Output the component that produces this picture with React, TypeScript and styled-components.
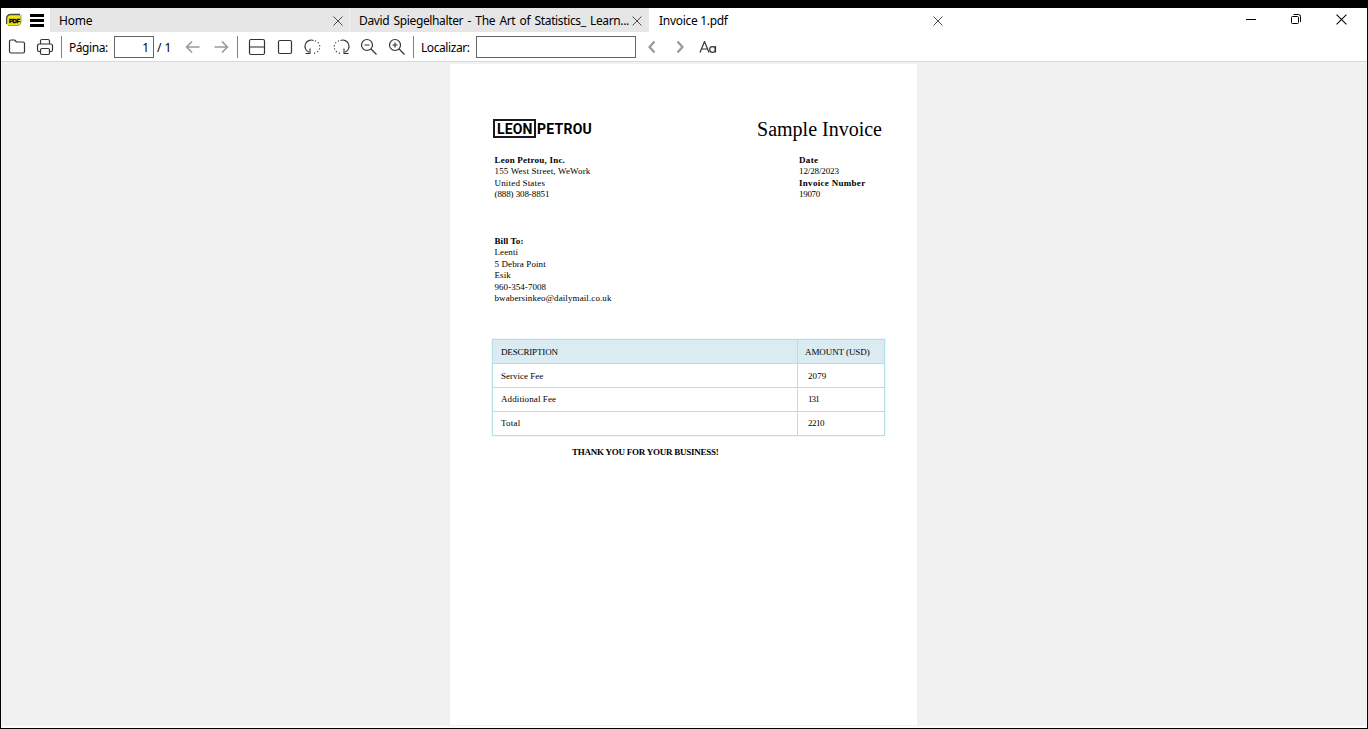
import React from "react";
import styled, { createGlobalStyle } from "styled-components";

const GlobalStyle = createGlobalStyle`
  *, *::before, *::after { box-sizing: border-box; }
  html, body, #root { margin: 0; height: 100%; }
  body { overflow: hidden; background: #000; }
`;

const Window = styled.div`
  height: 729px;
  width: 1368px;
  padding: 8px 1px 1px;
  background: #000;
  display: flex;
  flex-direction: column;
  font: 12px/16px "Noto Sans", "Open Sans", sans-serif;
  color: #000;
`;

const TitleBar = styled.header`
  height: 24px;
  flex: none;
  display: flex;
  background: #fff;
`;

const AppMenu = styled.div`
  width: 49px;
  flex: none;
  display: flex;
  align-items: center;
  padding-left: 5px;
  gap: 8px;
`;

const Tab = styled.div<{ $active?: boolean; $last?: boolean }>`
  width: ${(p) => (p.$last ? 299 : 300)}px;
  flex: none;
  display: flex;
  align-items: center;
  justify-content: space-between;
  padding: 1px ${(p) => (p.$last ? 7 : 6)}px 0 ${(p) => (p.$active ? 10 : 9)}px;
  background: ${(p) => (p.$active ? "#fff" : "#e6e6e6")};
  border-right: ${(p) => (p.$active || p.$last ? "none" : "1px solid #efefef")};
`;

const TabTitle = styled.span<{ $track?: number; $words?: number }>`
  white-space: nowrap;
  letter-spacing: ${(p) => p.$track ?? -0.3}px;
  word-spacing: ${(p) => p.$words ?? 0}px;
`;

const Icon = styled.svg`
  flex: none;
  display: block;
  fill: none;
`;

const Controls = styled.div`
  margin-left: auto;
  display: flex;
  align-items: flex-start;
  padding: 6px 20px 0 0;
  gap: 34px;
`;

const ToolBar = styled.div`
  height: 30px;
  flex: none;
  display: flex;
  align-items: center;
  background: #fff;
  border-bottom: 1px solid #d9d9d9;
  padding-left: 6px;
`;

const ToolButton = styled.div`
  width: 20px;
  height: 20px;
  margin-right: 8px;
  flex: none;
`;

const Divider = styled.i<{ $tight?: boolean }>`
  width: 1px;
  height: 22px;
  margin-left: ${(p) => (p.$tight ? -2 : 0)}px;
  background: #808080;
  flex: none;
`;

const Label = styled.span<{ $w: number; $track?: number }>`
  width: ${(p) => p.$w}px;
  flex: none;
  padding-top: 2px;
  white-space: nowrap;
  letter-spacing: ${(p) => p.$track ?? 0}px;
`;

const Field = styled.div<{ $w: number }>`
  width: ${(p) => p.$w}px;
  height: 22px;
  flex: none;
  border: 1px solid #646464;
  padding: 3px 4px 0;
  text-align: right;
`;

const Gap = styled.i<{ $w: number }>`
  width: ${(p) => p.$w}px;
  flex: none;
`;

const Canvas = styled.main`
  flex: 1;
  background: #f1f1f1;
  border-bottom: 2px solid #fff;
  padding: 2px 0 1px 449px;
  display: flex;
`;

const Page = styled.article`
  width: 467px;
  background: #fff;
  padding: 55px 32px 0 42px;
  font-family: "Liberation Serif", serif;
  font-size: 9px;
  line-height: 11.4px;
  color: #000;
`;

const PageHead = styled.div`
  display: flex;
  justify-content: space-between;
  height: 36px;
  padding: 0 3px 0 1px;
`;

const Logo = styled.div`
  display: flex;
  align-items: center;
  height: 19px;
  font: 700 14px/16px "Roboto", sans-serif;
`;

const LogoBox = styled.span`
  width: 43px;
  height: 19px;
  border: 2px solid #1a1a1a;
  padding: 0 0 0 2px;
  letter-spacing: 0.15px;
`;

const LogoRest = styled.span`
  padding: 1px 0 0 1px;
  letter-spacing: 0.25px;
`;

const Title = styled.h1`
  margin: 0;
  font-size: 20px;
  font-weight: 400;
  line-height: 21px;
  white-space: nowrap;
`;

const Parties = styled.div`
  display: flex;
  height: 81px;
  padding-left: 2.5px;
`;

const Block = styled.div<{ $w?: number }>`
  width: ${(p) => (p.$w ? p.$w + "px" : "auto")};
`;

const Line = styled.div<{ $b?: boolean; $track?: number }>`
  white-space: nowrap;
  font-weight: ${(p) => (p.$b ? 700 : 400)};
  letter-spacing: ${(p) => p.$track ?? 0.1}px;
`;

const BillTo = styled.div`
  height: 103px;
  padding-left: 2.5px;
`;

const Table = styled.div`
  width: 393px;
  border: 1px solid #b5dfe8;
  box-shadow: 0 0 0 0.5px #dff1f5;
`;

const Row = styled.div<{ $head?: boolean; $line?: number }>`
  display: grid;
  grid-template-columns: 304px 1fr;
  height: ${(p) => (p.$head ? 23 : 24)}px;
  line-height: ${(p) => p.$line ?? 23}px;
  background: ${(p) => (p.$head ? "#daecf2" : "#fff")};
  & + & { border-top: 1px solid #b5dfe8; }
`;

const Cell = styled.div<{ $amount?: boolean; $pad?: number; $track?: number }>`
  padding-left: ${(p) => p.$pad ?? 8}px;
  letter-spacing: ${(p) => p.$track ?? 0.1}px;
  border-left: ${(p) => (p.$amount ? "1px solid #b5dfe8" : "none")};
`;

const Thanks = styled.div`
  margin: 11px 0 0 80px;
  font-weight: 700;
  white-space: nowrap;
  letter-spacing: -0.24px;
`;

const CloseIcon = ({ s = 10, c = "#444" }: { s?: number; c?: string }) => (
  <Icon width={s} height={s} viewBox="0 0 10 10" stroke={c}>
    <path d="M.5.5l9 9M9.5.5l-9 9" strokeWidth="0.95" />
  </Icon>
);

const PdfBadge = () => (
  <Icon width="16" height="14" viewBox="0 0 16 14">
    <path d="M1 12V6Q1 2 6 2H14.5V9.500Q14.500 12 12 12Z" fill="#f2e414" />
    <path d="M.5 11V6Q.5 1.500 5 1.500H14" stroke="#4a4a30" strokeWidth="1.4" />
    <path d="M2 12.500H12Q14.800 12 15 9V2" stroke="#8a8420" strokeWidth=".8" />
    <text x="3" y="9.500" fontFamily="Liberation Sans" fontWeight="700" fontSize="6" fill="#000" stroke="#000" strokeWidth=".4" letterSpacing="-.4">PDF</text>
  </Icon>
);

const Tool = ({ children, c = "#333", w = 1.2 }: { children: React.ReactNode; c?: string; w?: number }) => (
  <ToolButton>
    <Icon width="20" height="20" viewBox="0 0 20 20" stroke={c} strokeWidth={w} strokeLinejoin="round">
      {children}
    </Icon>
  </ToolButton>
);

export default function App() {
  return (
    <>
      <GlobalStyle />
      <Window>
        <TitleBar>
          <AppMenu>
            <PdfBadge />
            <Icon width="14" height="13" viewBox="0 0 14 13">
              <path d="M0 0h14v3H0zM0 5h14v3H0zM0 10h14v3H0z" fill="#000" />
            </Icon>
          </AppMenu>
          <Tab><TabTitle $track={-0.2}>Home</TabTitle><CloseIcon /></Tab>
          <Tab $last><TabTitle $words={1.6} $track={-0.37}>David Spiegelhalter - The Art of Statistics_ Learn...</TabTitle><CloseIcon /></Tab>
          <Tab $active><TabTitle>Invoice 1.pdf</TabTitle><CloseIcon /></Tab>
          <Controls>
            <Icon width="11" height="11" viewBox="0 0 11 11"><path d="M0 5.500h10" stroke="#000" /></Icon>
            <Icon width="11" height="11" viewBox="0 0 11 11" stroke="#000">
              <rect x=".5" y="2.500" width="7" height="7" rx="1" />
              <path d="M2.500.5H7.500Q9.500.5 9.500 2.500V8" />
            </Icon>
            <CloseIcon s={11} c="#000" />
          </Controls>
        </TitleBar>

        <ToolBar>
          <Tool><path d="M2.500 4.500Q2.500 3 4 3H7.500L9.500 5H16Q17.500 5 17.500 6.500V14.500Q17.500 16 16 16H4Q2.500 16 2.500 14.500Z" /></Tool>
          <Tool>
            <path d="M5.500 7V4Q5.500 2.500 7 2.500H13Q14.500 2.500 14.500 4V7M5.500 14.500H4Q2.500 14.500 2.500 13V9Q2.500 7 4.500 7H15.500Q17.500 7 17.500 9V13Q17.500 14.500 16 14.500H14.500" />
            <rect x="5.500" y="11.500" width="9" height="6" rx="1.500" />
          </Tool>
          <Divider $tight />
          <Gap $w={7} />
          <Label $w={45} $track={-0.45}>Página:</Label>
          <Field $w={40}>1</Field>
          <Gap $w={3} />
          <Label $w={26}>/ 1</Label>
          <Tool c="#9b9b9b" w={1.7}><path d="M16.500 10H4M9 4.500L3.500 10L9 15.500" /></Tool>
          <Tool c="#9b9b9b" w={1.7}><path d="M3.500 10H16M11 4.500L16.500 10L11 15.500" /></Tool>
          <Divider $tight />
          <Gap $w={9} />
          <Tool><rect x="2.500" y="2.500" width="15" height="15" rx="1.500" /><path d="M3 10H17" stroke="#777" strokeWidth="1.600" /></Tool>
          <Tool><rect x="3.500" y="3.500" width="13" height="13" rx="1.500" /></Tool>
          <Tool w={1.1}>
            <path d="M10.500 3.500A6.200 6.200 0 0 0 6 15.200M7 11.500V16.500H2.500" />
            <path d="M12 3.800A6.200 6.200 0 0 1 9 16" strokeDasharray="1.200 2" />
          </Tool>
          <Tool w={1.1}>
            <path d="M9.500 3.500A6.200 6.200 0 0 1 14 15.200M13 11.500V16.500H17.500" />
            <path d="M8 3.800A6.200 6.200 0 0 0 11 16" strokeDasharray="1.200 2" />
          </Tool>
          <Tool><circle cx="8" cy="8" r="5.500" /><path d="M12 12L17.500 17.500M5.500 8H10.500" /></Tool>
          <Tool><circle cx="8" cy="8" r="5.500" /><path d="M12 12L17.500 17.500M5.500 8H10.500M8 5.500V10.500" /></Tool>
          <Divider $tight />
          <Gap $w={7} />
          <Label $w={55} $track={-0.42}>Localizar:</Label>
          <Field $w={160} />
          <Gap $w={6} />
          <Tool c="#9b9b9b" w={2.4}><path d="M12.500 4.500L7.500 10L12.500 15.500" /></Tool>
          <Tool c="#9b9b9b" w={2.4}><path d="M7.500 4.500L12.500 10L7.500 15.500" /></Tool>
          <Tool w={1.2}>
            <path d="M2 15.500L6.500 4.500L11 15.500M3.500 12H9.500M17.500 9V15.500" />
            <circle cx="14.500" cy="12.500" r="2.800" />
          </Tool>
        </ToolBar>

        <Canvas>
          <Page>
            <PageHead>
              <Logo><LogoBox>LEON</LogoBox><LogoRest>PETROU</LogoRest></Logo>
              <Title>Sample Invoice</Title>
            </PageHead>
            <Parties>
              <Block $w={304.5}>
                <Line $b $track={0.22}>Leon Petrou, Inc.</Line>
                <Line $track={0.15}>155 West Street, WeWork</Line>
                <Line $track={0.18}>United States</Line>
                <Line $track={-0.1}>(888) 308-8851</Line>
              </Block>
              <Block>
                <Line $b $track={0.35}>Date</Line>
                <Line $track={-0.12}>12/28/2023</Line>
                <Line $b $track={0.3}>Invoice Number</Line>
                <Line $track={-0.3}>19070</Line>
              </Block>
            </Parties>
            <BillTo>
              <Line $b>Bill To:</Line>
              <Line>Leenti</Line>
              <Line>5 Debra Point</Line>
              <Line>Esik</Line>
              <Line $track={0.05}>960-354-7008</Line>
              <Line>bwabersinkeo@dailymail.co.uk</Line>
            </BillTo>
            <Table>
              <Row $head $line={25}><Cell $track={-0.15}>DESCRIPTION</Cell><Cell $amount $pad={7} $track={-0.08}>AMOUNT (USD)</Cell></Row>
              <Row $line={25}><Cell $track={0}>Service Fee</Cell><Cell $amount $pad={10}>2079</Cell></Row>
              <Row><Cell>Additional Fee</Cell><Cell $amount $pad={10} $track={-0.9}>131</Cell></Row>
              <Row $line={22}><Cell $track={0.2}>Total</Cell><Cell $amount $pad={10} $track={-0.5}>2210</Cell></Row>
            </Table>
            <Thanks>THANK YOU FOR YOUR BUSINESS!</Thanks>
          </Page>
        </Canvas>
      </Window>
    </>
  );
}
